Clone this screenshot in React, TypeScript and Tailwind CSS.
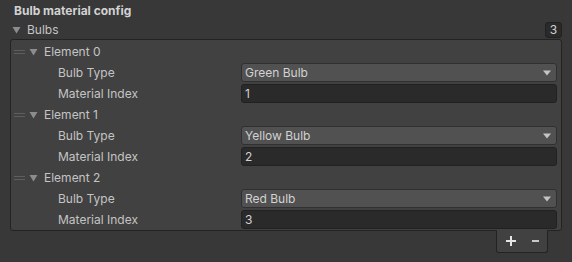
import React from "react";

const Tri = ({ className = "" }: { className?: string }) => (
  <svg width="9" height="8" viewBox="0 0 9 8" className={className}>
    <path d="M0.5 1 L8.5 1 L4.5 7.5 Z" fill="#8c8c8c" />
  </svg>
);

const Handle = () => (
  <svg width="11" height="6" viewBox="0 0 11 6" className="shrink-0">
    <rect x="0" y="1" width="11" height="1" fill="#5e5e5e" />
    <rect x="0" y="4" width="11" height="1" fill="#5e5e5e" />
  </svg>
);

const items = [
  { bulb: "Green Bulb", idx: "1" },
  { bulb: "Yellow Bulb", idx: "2" },
  { bulb: "Red Bulb", idx: "3" },
];

export default function App() {
  return (
    <div
      className="w-[572px] h-[262px] bg-[#383838] text-[12px] text-[#c4c4c4] overflow-hidden"
      style={{ fontFamily: "Inter, 'Noto Sans', sans-serif" }}
    >
      <div className="h-[21px] flex items-center pl-[14px] font-bold text-[#d2d2d2]">
        Bulb material config
      </div>
      <div className="h-[18px] flex items-center pl-[12px] pr-[10px]">
        <Tri />
        <span className="ml-[6px] flex-1">Bulbs</span>
        <div className="w-[17px] h-[16px] rounded-[3px] bg-[#2a2a2a] border border-[#212121] flex items-center justify-center text-[#d2d2d2] -mt-[1px]">
          3
        </div>
      </div>
      <div className="ml-[10px] mr-[10px] border border-[#232323] rounded-[3px] bg-[#414141] pt-[1px]">
        {items.map((it, i) => (
          <div key={i}>
            <div className="h-[21px] flex items-center pl-[3px]">
              <Handle />
              <Tri className="ml-[4px]" />
              <span className="ml-[6px]">Element {i}</span>
            </div>
            <div className="h-[21px] flex items-center">
              <span className="w-[230px] pl-[47px]">Bulb Type</span>
              <div className="flex-1 mr-[4px] h-[19px] rounded-[3px] bg-[#515151] border border-[#303030] flex items-center pl-[3px] pr-[5px] text-[#d2d2d2]">
                <span className="flex-1">{it.bulb}</span>
                <svg width="8" height="6" viewBox="0 0 8 6">
                  <path d="M0 0.5 L8 0.5 L4 5.5 Z" fill="#c4c4c4" />
                </svg>
              </div>
            </div>
            <div className="h-[21px] flex items-center">
              <span className="w-[230px] pl-[47px]">Material Index</span>
              <div className="flex-1 mr-[4px] h-[19px] rounded-[3px] bg-[#2a2a2a] border border-[#212121] flex items-center pl-[3px] text-[#d2d2d2]">
                {it.idx}
              </div>
            </div>
          </div>
        ))}
      </div>
      <div className="flex justify-end pr-[24px]">
        <div className="-mt-px w-[52px] h-[23px] bg-[#414141] border border-[#232323] border-t-0 rounded-b-[3px] flex items-center justify-center gap-[16px] text-[#e0e0e0] font-bold text-[15px]">
          <svg width="10" height="10" viewBox="0 0 10 10">
            <rect x="0" y="4" width="10" height="2" fill="#e4e4e4" />
            <rect x="4" y="0" width="2" height="10" fill="#e4e4e4" />
          </svg>
          <svg width="7" height="2" viewBox="0 0 7 2">
            <rect x="0" y="0" width="7" height="2" fill="#c8c8c8" />
          </svg>
        </div>
      </div>
    </div>
  );
}
